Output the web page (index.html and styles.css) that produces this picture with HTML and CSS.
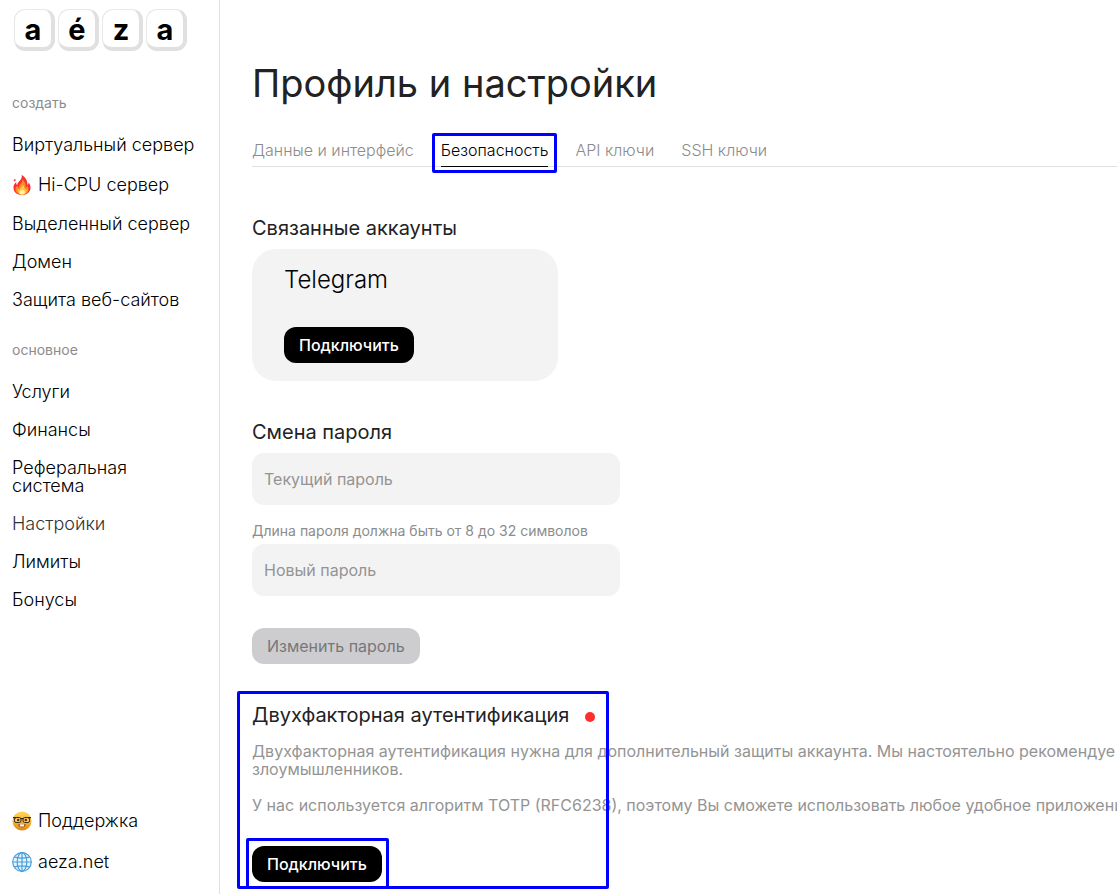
FILE: index.html
```
<!DOCTYPE html>
<html lang="ru">
<head>
  <meta charset="UTF-8">
  <meta name="viewport" content="width=device-width, initial-scale=1.0">
  <title>Профиль и настройки</title>
  <link rel="stylesheet" href="styles.css">
</head>
<body>
  <div class="page">
    <aside class="sidebar">
      <!-- Logo -->
      <a class="logo" href="#">
        <span class="key">a</span>
        <span class="key">é</span>
        <span class="key">z</span>
        <span class="key">a</span>
      </a>

      <!-- Menu -->
      <nav class="menu">
        <p class="menu-title">создать</p>
        <a href="#">Виртуальный сервер</a>
        <a class="with-icon" href="#">
          <svg class="icon" viewBox="0 0 20 20" aria-hidden="true">
            <path d="M9.6 0c.5 2.500-.2 3.800-1.500 5.300C6.600 7 5.400 8.200 5.300 10 4.400 9.300 4.100 8.100 4.200 7 2.100 9 1.300 11.100 1.500 13.300 1.800 17.500 5.300 20 10 20s8.300-2.700 8.500-7c.1-2.400-.8-4.200-2-5.800.1 1.300-.3 2.200-1.100 2.800C15.700 5.900 13.500 2 9.600 0z" fill="#f8312f"/>
            <path d="M10.200 4.500c.3 2.200-.8 3.300-2 4.800-.9 1.200-1.300 2.200-1 3.500-1-.3-1.700-1-2-2C3.700 12 3.200 13.300 3.500 15c.6 3 3.300 4.700 6.500 4.700 3.700 0 6.400-2 6.500-5.200 0-1.600-.5-2.900-1.300-4-.1 1-.6 1.800-1.500 2.200.3-3.600-.8-6.300-3.500-8.200z" fill="#fb8b2b"/>
            <path d="M10.500 9.500c0 1.700-1.100 2.500-2 3.700-.5.600-.7 1.200-.7 1.900-.7-.1-1.300-.5-1.600-1-.9 2.700.6 5.500 3.900 5.500 2.900 0 4.700-1.700 4.500-4.200-.1-.8-.4-1.400-.8-2-.2.600-.5 1-1.100 1.200 0-2.200-.7-3.900-2.200-5.100z" fill="#ffc83d"/>
            <ellipse cx="10.200" cy="17.200" rx="2.600" ry="2.300" fill="#fff2a8"/>
            <circle cx="2.700" cy="5.300" r="1" fill="#f8312f"/>
          </svg>
          <span>Hi-CPU сервер</span>
        </a>
        <a href="#">Выделенный сервер</a>
        <a href="#">Домен</a>
        <a href="#">Защита веб-сайтов</a>

        <p class="menu-title">основное</p>
        <a href="#">Услуги</a>
        <a href="#">Финансы</a>
        <a href="#">Реферальная<br>система</a>
        <a class="current" href="#">Настройки</a>
        <a href="#">Лимиты</a>
        <a href="#">Бонусы</a>
      </nav>

      <!-- Support links -->
      <nav class="menu menu-bottom">
        <a class="with-icon" href="#">
          <svg class="icon" viewBox="0 0 20 20" aria-hidden="true">
            <defs>
              <linearGradient id="face" x1="0" y1="0" x2="0" y2="1">
                <stop offset="0" stop-color="#ffd75a"/>
                <stop offset="0.6" stop-color="#f7ae2c"/>
                <stop offset="1" stop-color="#dc8516"/>
              </linearGradient>
            </defs>
            <circle cx="10" cy="10" r="9.500" fill="url(#face)"/>
            <path d="M6 13.200h8c-.6 2.200-2.100 3.200-4 3.200s-3.400-1-4-3.200z" fill="#a85a1a"/>
            <path d="M8 13.400h4v2H8z" fill="#fff"/>
            <rect x="2.500" y="6.500" width="6.400" height="5" rx="1.600" fill="#f4c768" stroke="#3b2a17" stroke-width="1"/>
            <rect x="11.100" y="6.500" width="6.400" height="5" rx="1.600" fill="#f4c768" stroke="#3b2a17" stroke-width="1"/>
            <path d="M1 6.700h3M16 6.700h3M8.500 7.600h3" stroke="#3b2a17" stroke-width="1.200"/>
            <circle cx="6.200" cy="9" r="1.200" fill="#4b2a12"/>
            <circle cx="13.800" cy="9" r="1.200" fill="#4b2a12"/>
          </svg>
          <span>Поддержка</span>
        </a>
        <a class="with-icon" href="#">
          <svg class="icon" viewBox="0 0 20 20" aria-hidden="true">
            <circle cx="10" cy="10" r="9.300" fill="#e4f4fd"/>
            <g fill="none" stroke="#4a9fd9" stroke-width="1.200">
              <circle cx="10" cy="10" r="9.300"/>
              <ellipse cx="10" cy="10" rx="4.800" ry="9.300"/>
              <path d="M10 .7v18.600M.7 10h18.600M2.500 5.200c4.500 1.200 10.500 1.200 15 0M2.500 14.800c4.500-1.200 10.500-1.200 15 0"/>
            </g>
          </svg>
          <span>aeza.net</span>
        </a>
      </nav>
    </aside>

    <main class="content">
      <h1>Профиль и настройки</h1>

      <nav class="tabs">
        <a href="#">Данные и интерфейс</a>
        <a class="active" href="#">Безопасность</a>
        <a href="#">API ключи</a>
        <a href="#">SSH ключи</a>
      </nav>

      <!-- Linked accounts -->
      <section class="accounts">
        <h2>Связанные аккаунты</h2>
        <div class="card">
          <h3>Telegram</h3>
          <button class="btn" type="button">Подключить</button>
        </div>
      </section>

      <!-- Password -->
      <section>
        <h2>Смена пароля</h2>
        <form class="password-form">
          <input type="password" name="current_password" placeholder="Текущий пароль" aria-label="Текущий пароль">
          <label for="new-password">Длина пароля должна быть от 8 до 32 символов</label>
          <input type="password" id="new-password" name="new_password" placeholder="Новый пароль">
          <button class="btn" type="submit" disabled>Изменить пароль</button>
        </form>
      </section>

      <!-- Two-factor authentication -->
      <section class="two-factor">
        <h2>Двухфакторная аутентификация <span class="dot"></span></h2>
        <p>Двухфакторная аутентификация нужна для дополнительный защиты аккаунта. Мы настоятельно рекомендуе<br>злоумышленников.</p>
        <p>У нас используется алгоритм TOTP (RFC6238), поэтому Вы сможете использовать любое удобное приложени</p>
        <div class="connect">
          <button class="btn" type="button">Подключить</button>
        </div>
      </section>
    </main>
  </div>
</body>
</html>
```
FILE: styles.css
```
*, *::after {
  box-sizing: border-box;
}
body {
  margin: 0;
  font-family: Inter, "Liberation Sans", sans-serif;
  font-size: 16px;
  line-height: 18px;
  color: #222;
  background-color: #fff;
}
a {
  color: inherit;
  text-decoration: none;
}
h1, h2, h3, p {
  margin: 0;
  font-weight: 400;
}
.page {
  display: flex;
  min-height: 100vh;
}

/* Sidebar */
.sidebar {
  display: flex;
  flex-direction: column;
  flex: 0 0 220px;
  padding: 9px 12px 12px;
  border-right: 1px solid #e0e0e0;
}
.logo {
  display: flex;
  gap: 3px;
  padding-left: 2px;
  margin-bottom: 43px;
}
.key {
  width: 41px;
  height: 42px;
  border: 1px solid #e8e8e8;
  border-right: 4px solid #e0e0e0;
  border-bottom: 4px solid #e0e0e0;
  border-radius: 11px;
  color: #000;
  font-size: 29px;
  font-weight: 700;
  line-height: 39px;
  text-align: center;
}
.menu {
  display: flex;
  flex-direction: column;
}
.menu-title {
  margin-bottom: 14px;
  color: #8c8c8c;
  font-size: 14px;
}
.menu a {
  padding: 10px 0;
  color: #000;
  font-size: 18px;
  font-weight: 300;
}
.menu a + .menu-title {
  margin-top: 22px;
}
.menu .with-icon {
  display: flex;
  align-items: center;
  gap: 6px;
  min-height: 41px;
}
.menu .current {
  color: #333;
}
.icon {
  width: 20px;
  height: 20px;
}
.menu-bottom {
  margin-top: auto;
}

/* Content */
.content {
  flex: 1;
  min-width: 0;
  padding: 59px 0 12px 32px;
  overflow: hidden;
}
h1 {
  font-size: 38px;
  line-height: 48px;
}
.tabs {
  display: flex;
  gap: 27px;
  margin-top: 31px;
  margin-bottom: 49px;
  border-bottom: 1px solid #e0e0e0;
}
.tabs a {
  position: relative;
  height: 29px;
  padding-top: 3px;
  margin-bottom: -1px;
  color: #8c8c8c;
  font-weight: 300;
}
.tabs .active {
  border-bottom: 1px solid #000;
  color: #000;
}
h2 {
  margin-bottom: 9px;
  font-size: 20px;
  line-height: 24px;
}
.accounts {
  margin-bottom: 39px;
}
.card {
  max-width: 306px;
  padding: 16px 32px 18px;
  border-radius: 24px;
  background-color: #f3f3f3;
}
h3 {
  margin-bottom: 32px;
  color: #000;
  font-size: 24px;
  font-weight: 300;
  line-height: 30px;
}
.btn {
  height: 36px;
  padding: 0 15px;
  border: none;
  border-radius: 12px;
  background-color: #000;
  color: #fff;
  font-family: inherit;
  font-size: 16px;
  font-weight: 500;
  cursor: pointer;
}
.btn:disabled {
  background-color: #cdcdcf;
  color: #77777a;
  font-weight: 400;
  cursor: default;
}
.password-form {
  display: flex;
  flex-direction: column;
  align-items: flex-start;
}
.password-form input {
  width: 100%;
  max-width: 368px;
  height: 52px;
  padding: 0 12px;
  border: none;
  border-radius: 12px;
  background-color: #f3f3f3;
  font-family: inherit;
  font-size: 16px;
}
.password-form input::placeholder {
  color: #949494;
}
.password-form label {
  margin: 17px 0 4px;
  color: #8c8c8c;
  font-size: 14px;
}
.password-form .btn {
  margin-top: 32px;
}
.two-factor {
  position: relative;
  margin-top: 39px;
}
.two-factor h2 {
  margin-bottom: 15px;
}
.two-factor p {
  margin-bottom: 18px;
  color: #949494;
  white-space: nowrap;
}
.dot {
  display: inline-block;
  width: 10px;
  height: 10px;
  margin-left: 10px;
  border-radius: 50%;
  background-color: #ff2d2d;
}
.connect {
  position: relative;
  width: fit-content;
  margin-top: 32px;
}

/* Highlight frames */
.tabs .active::after,
.two-factor::after,
.connect::after {
  content: "";
  position: absolute;
  border: 3px solid #00f;
  border-radius: 2px;
  pointer-events: none;
}
.tabs .active::after {
  inset: -5px -9px -7px -9px;
}
.two-factor::after {
  top: -12px;
  bottom: -7px;
  left: -15px;
  width: 372px;
}
.connect::after {
  inset: -8px -7px -7px -6px;
}
```
